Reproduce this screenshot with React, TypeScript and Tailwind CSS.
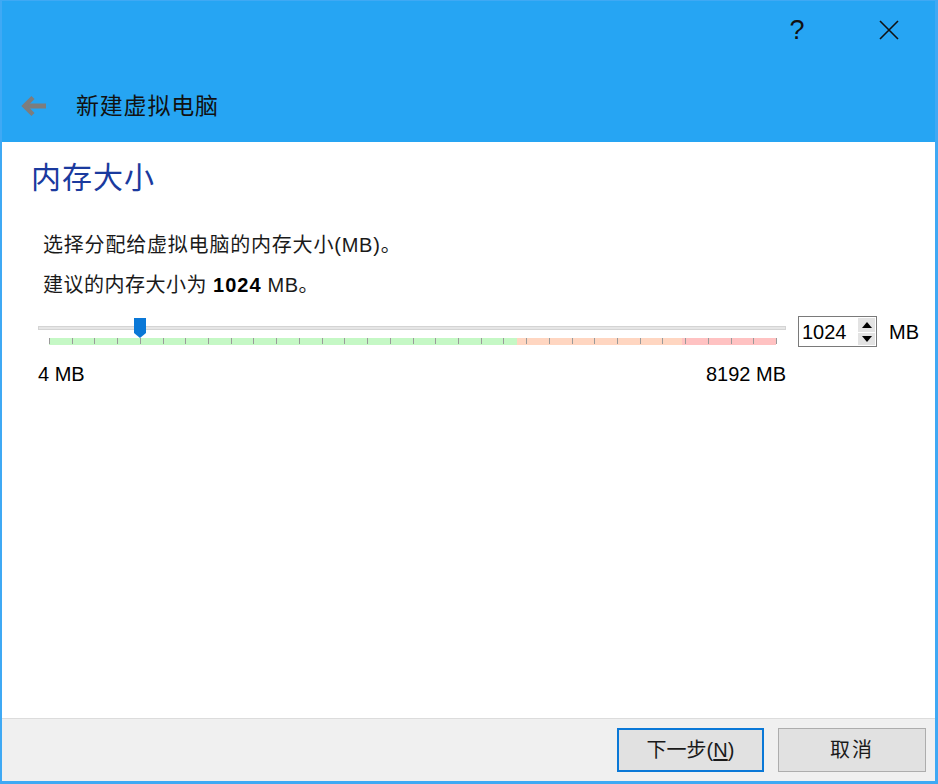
import React from 'react';

const CJK = '"Liberation Sans", "Noto Sans CJK SC", sans-serif';

// tick marks every 256 MB along the scale (0..8192)
const TICKS = Array.from({ length: 33 }, (_, i) => i);

function BackArrow() {
  return (
    <svg width="26" height="22" viewBox="0 0 26 22" className="block">
      <path d="M25 11H4" stroke="#7d7d7d" strokeWidth="5" fill="none" />
      <path d="M12 2.5L3.5 11L12 19.5" stroke="#7d7d7d" strokeWidth="4.5" fill="none" />
    </svg>
  );
}

function CloseIcon() {
  return (
    <svg width="20" height="20" viewBox="0 0 20 20" className="block">
      <path d="M1 1L19 19M19 1L1 19" stroke="#111" strokeWidth="1.6" fill="none" />
    </svg>
  );
}

function MemorySlider() {
  // pixel geometry inside a 748px wide track
  const barLeft = 11;
  const barWidth = 727;
  const value = 1024;
  const thumbX = barLeft + (value / 8192) * barWidth;

  return (
    <div className="relative w-[748px] h-[30px] shrink-0">
      {/* groove */}
      <div className="absolute left-0 right-0 top-[10px] h-[4px] bg-[#e6e6e6] border border-[#d4d4d4]" />
      {/* coloured scale */}
      <div className="absolute top-[22px] h-[7px] flex" style={{ left: barLeft, width: barWidth }}>
        <div className="h-full w-[468px] bg-[#c5f8c5]" />
        <div className="h-full w-[165px] bg-[#ffd6c1]" />
        <div className="h-full flex-1 bg-[#ffc2c2]" />
      </div>
      {TICKS.map((i) => (
        <div
          key={i}
          className="absolute top-[22px] h-[6px] w-px bg-[#9a9a9a]"
          style={{ left: barLeft + Math.round((i * barWidth) / 32) }}
        />
      ))}
      {/* thumb */}
      <svg
        width="12"
        height="20"
        viewBox="0 0 12 20"
        className="absolute top-[2px]"
        style={{ left: thumbX - 6 }}>
        <path d="M0 0H12V15L6 20L0 15Z" fill="#0a78d7" />
      </svg>
    </div>
  );
}

function SpinBox() {
  return (
    <div className="w-[79px] h-[31px] border border-[#7a7a7a] bg-white flex items-center justify-between pl-[3px] pr-[1px]">
      <span className="text-[20px] leading-none text-black" style={{ fontFamily: CJK }}>
        1024
      </span>
      <div className="flex flex-col gap-px w-[17px]">
        <div className="h-[14px] bg-[#e3e3e3] flex items-center justify-center">
          <svg width="10" height="6" viewBox="0 0 10 6">
            <path d="M0 6L5 0L10 6Z" fill="#000" />
          </svg>
        </div>
        <div className="h-[12px] bg-[#e3e3e3] flex items-center justify-center">
          <svg width="10" height="6" viewBox="0 0 10 6">
            <path d="M0 0L5 6L10 0Z" fill="#000" />
          </svg>
        </div>
      </div>
    </div>
  );
}

export default function App() {
  return (
    <div
      className="w-[938px] h-[784px] bg-[#3fa9f4] pt-px pl-[2px] pr-[3px] pb-[3px] flex flex-col overflow-hidden"
      style={{ fontFamily: CJK }}>
      {/* Header */}
      <div className="h-[141px] shrink-0 bg-[#26a5f3] flex flex-col">
        <div className="h-[58px] flex items-center justify-end pr-[36px]">
          <span className="w-[16px] text-center text-[27px] leading-none text-[#111] font-light mr-[74px]">?</span>
          <CloseIcon />
        </div>
        <div className="mt-[35px] h-[24px] flex items-center pl-[19px]">
          <BackArrow />
          <span className="ml-[29px] text-[23px] leading-none tracking-[0.8px] text-[#111]">新建虚拟电脑</span>
        </div>
      </div>

      {/* Page content */}
      <div className="flex-1 bg-white flex flex-col">
        <h1 className="mt-[18px] ml-[29px] h-[36px] text-[30px] leading-[36px] tracking-[1px] font-normal text-[#1a3a9e]">
          内存大小
        </h1>
        <p className="mt-[35px] ml-[41px] h-[28px] text-[20px] leading-[28px] tracking-[0.8px] text-[#1a1a1a]">
          选择分配给虚拟电脑的内存大小(MB)。
        </p>
        <p className="mt-[12px] ml-[41px] h-[28px] text-[20px] leading-[28px] tracking-[0.5px] text-[#1a1a1a]">
          建议的内存大小为 <span className="font-bold text-black tracking-[1px]">1024</span> MB。
        </p>

        <div className="mt-[17px] ml-[36px] flex items-start">
          <MemorySlider />
          <div className="ml-[12px]">
            <SpinBox />
          </div>
          <span className="ml-[12px] h-[31px] flex items-center text-[20px] text-black">MB</span>
        </div>

        <div className="mt-[15px] ml-[36px] w-[748px] h-[24px] flex justify-between text-[20px] leading-[24px] text-black">
          <span>4 MB</span>
          <span>8192 MB</span>
        </div>

        <div className="flex-1" />

        {/* Footer */}
        <div className="h-[63px] shrink-0 bg-[#f0f0f0] border-t border-[#dcdcdc] flex items-start justify-end pt-[9px] pr-[9px] gap-[14px]">
          <button
            type="button"
            className="w-[147px] h-[44px] bg-[#e1e1e1] border-2 border-[#0a78d7] text-[20px] text-[#1a1a1a] flex items-center justify-center">
            下一步(<span className="underline underline-offset-2">N</span>)
          </button>
          <button
            type="button"
            className="w-[148px] h-[44px] bg-[#e1e1e1] border border-[#adadad] text-[20px] text-[#1a1a1a] flex items-center justify-center tracking-[2px]">
            取消
          </button>
        </div>
      </div>
    </div>
  );
}
